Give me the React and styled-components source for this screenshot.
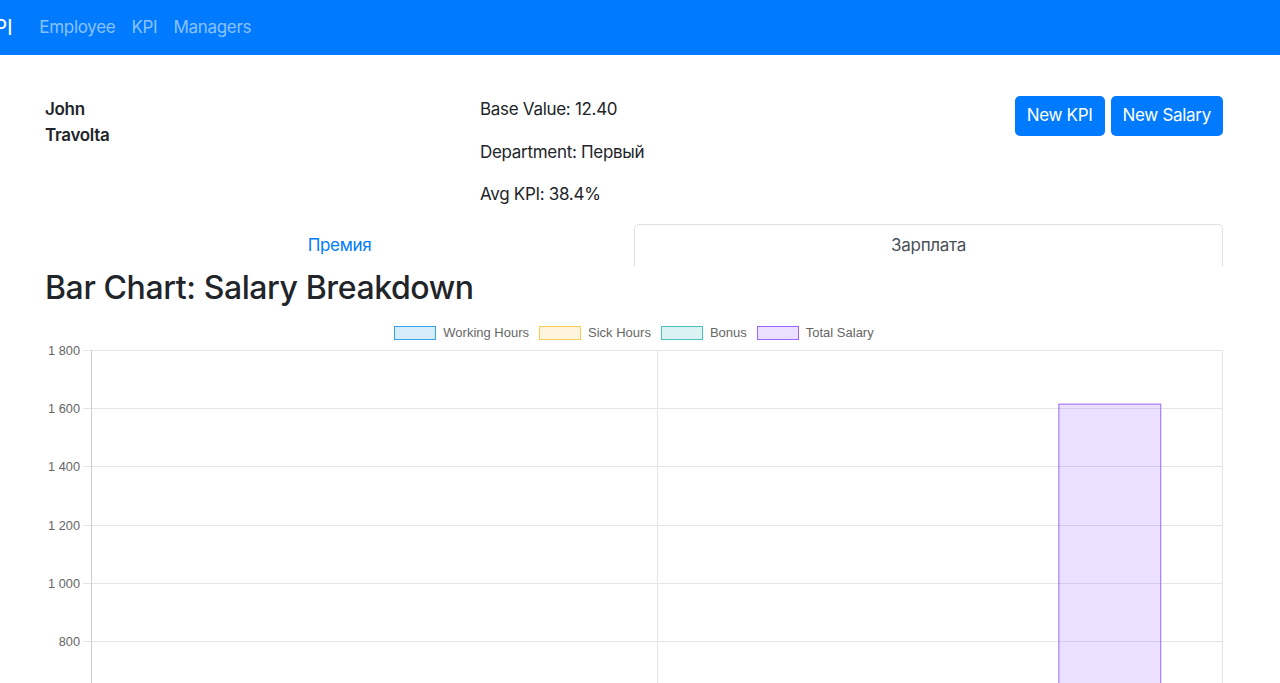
import React from 'react';
import styled, { createGlobalStyle } from 'styled-components';

const GlobalStyle = createGlobalStyle`
    body {
        margin: 0;
        font-family: Inter, "Noto Sans", sans-serif;
        font-size: 17px;
        line-height: 1.5;
        letter-spacing: -0.3px;
        color: #212529;
        background: #fff;
        overflow-x: hidden;
    }
`;

const Navbar = styled.nav`
    height: 55px;
    background: #007bff;
    display: flex;
    align-items: center;
    overflow: hidden;
`;

const Brand = styled.span`
    font-size: 21px;
    color: #fff;
    margin-left: -20px;
    margin-right: 19px;
`;

const NavLink = styled.a`
    color: rgba(255, 255, 255, 0.55);
    padding: 0 8px;
    text-decoration: none;
    font-size: 17px;
`;

const Main = styled.main`
    margin-left: 45px;
    width: 1178px;
`;

const InfoRow = styled.div`
    display: grid;
    grid-template-columns: 435px 1fr auto;
    padding-top: 42px;
`;

const Name = styled.div`
    font-weight: 600;
    max-width: 90px;
    line-height: 25.5px;
`;

const Info = styled.p`
    margin: 0 0 17px;
    line-height: 25.5px;
`;

const Actions = styled.div`
    display: flex;
    gap: 6px;
    align-items: flex-start;
    margin-top: -1px;
`;

const Button = styled.button`
    font-family: inherit;
    font-size: 17px;
    letter-spacing: inherit;
    line-height: 25.5px;
    padding: 7px 12px;
    border: none;
    border-radius: 5px;
    background: #007bff;
    color: #fff;
`;

const Tabs = styled.div`
    display: flex;
    border-bottom: 1px solid #dee2e6;
    margin-top: -1px;
`;

const Tab = styled.div`
    flex: 1;
    text-align: center;
    line-height: 25.5px;
    padding: 8px 17px;
    border: 1px solid ${props => props.active ? '#dee2e6' : 'transparent'};
    border-bottom-color: ${props => props.active ? '#fff' : 'transparent'};
    border-radius: 5px 5px 0 0;
    margin-bottom: -1px;
    color: ${props => props.active ? '#495057' : '#007bff'};
    background: #fff;
`;

const Title = styled.h2`
    font-size: 32px;
    font-weight: 500;
    letter-spacing: -0.4px;
    line-height: 40px;
    margin: 1px 0 12px;
`;

const Legend = styled.div`
    display: flex;
    justify-content: center;
    align-items: center;
    gap: 10px;
    height: 26px;
    font-family: "Liberation Sans", Arial, sans-serif;
    font-size: 13px;
    letter-spacing: 0;
    color: #666;
`;

const LegendItem = styled.div`
    display: flex;
    align-items: center;
    gap: 7px;
`;

const Swatch = styled.span`
    width: 40px;
    height: 12px;
    border: 1px solid ${props => props.stroke};
    background: ${props => props.fill};
`;

const ChartSvg = styled.svg`
    display: block;
    font-family: "Liberation Sans", Arial, sans-serif;
    letter-spacing: 0;
`;

const datasets = [
    { label: 'Working Hours', stroke: 'rgb(54, 162, 235)', fill: 'rgba(54, 162, 235, 0.2)', data: [420, 496] },
    { label: 'Sick Hours', stroke: 'rgb(255, 206, 86)', fill: 'rgba(255, 206, 86, 0.2)', data: [0, 0] },
    { label: 'Bonus', stroke: 'rgb(75, 192, 192)', fill: 'rgba(75, 192, 192, 0.2)', data: [180, 118] },
    { label: 'Total Salary', stroke: 'rgb(153, 102, 255)', fill: 'rgba(153, 102, 255, 0.2)', data: [600, 1614] },
];

const W = 1178;
const left = 46;
const top = 4;
const perUnit = 58.2 / 200;
const zeroY = top + 1800 * perUnit;
const ticks = [1800, 1600, 1400, 1200, 1000, 800, 600, 400, 200, 0];

function fmt(n) {
    return n >= 1000 ? `${Math.floor(n / 1000)} ${String(n % 1000).padStart(3, '0')}` : String(n);
}

function Chart() {
    const catW = (W - left) / 2;
    const groupW = catW * 0.8;
    const slot = groupW / datasets.length;
    const barW = slot * 0.9;

    return (
        <ChartSvg width={W} height={560}>
            {ticks.map(t => {
                const y = Math.round(top + (1800 - t) * perUnit) + 0.5;
                return (
                    <g key={t}>
                        <line x1={38} x2={W} y1={y} y2={y} stroke="#e5e5e5" />
                        <text x={35} y={y + 4.5} fontSize="12.75" fill="#666" textAnchor="end">{fmt(t)}</text>
                    </g>
                );
            })}
            <line x1={612.5} x2={612.5} y1={top} y2={560} stroke="#e5e5e5" />
            <line x1={W - 0.5} x2={W - 0.5} y1={top} y2={560} stroke="#e5e5e5" />
            {[0, 1].map(c =>
                datasets.map((d, i) => {
                    const v = d.data[c];
                    if (!v) return null;
                    const x = left + catW * c + (catW - groupW) / 2 + slot * i + (slot - barW) / 2;
                    const y = zeroY - v * perUnit;
                    return (
                        <rect key={`${c}-${i}`} x={x} y={y} width={barW} height={zeroY - y}
                            fill={d.fill} stroke={d.stroke} strokeWidth="1" />
                    );
                })
            )}
            <line x1={left + 0.5} x2={left + 0.5} y1={top} y2={560} stroke="#cfcfcf" />
        </ChartSvg>
    );
}

function App() {
    return (
        <>
            <GlobalStyle />
            <Navbar>
                <Brand>KPI</Brand>
                <NavLink href="#">Employee</NavLink>
                <NavLink href="#">KPI</NavLink>
                <NavLink href="#">Managers</NavLink>
            </Navbar>
            <Main>
                <InfoRow>
                    <Name>John Travolta</Name>
                    <div>
                        <Info>Base Value: 12.40</Info>
                        <Info>Department: Первый</Info>
                        <Info>Avg KPI: 38.4%</Info>
                    </div>
                    <Actions>
                        <Button>New KPI</Button>
                        <Button>New Salary</Button>
                    </Actions>
                </InfoRow>
                <Tabs>
                    <Tab>Премия</Tab>
                    <Tab active>Зарплата</Tab>
                </Tabs>
                <Title>Bar Chart: Salary Breakdown</Title>
                <Legend>
                    {datasets.map(d => (
                        <LegendItem key={d.label}>
                            <Swatch stroke={d.stroke} fill={d.fill} />
                            {d.label}
                        </LegendItem>
                    ))}
                </Legend>
                <Chart />
            </Main>
        </>
    );
}

export default App;
